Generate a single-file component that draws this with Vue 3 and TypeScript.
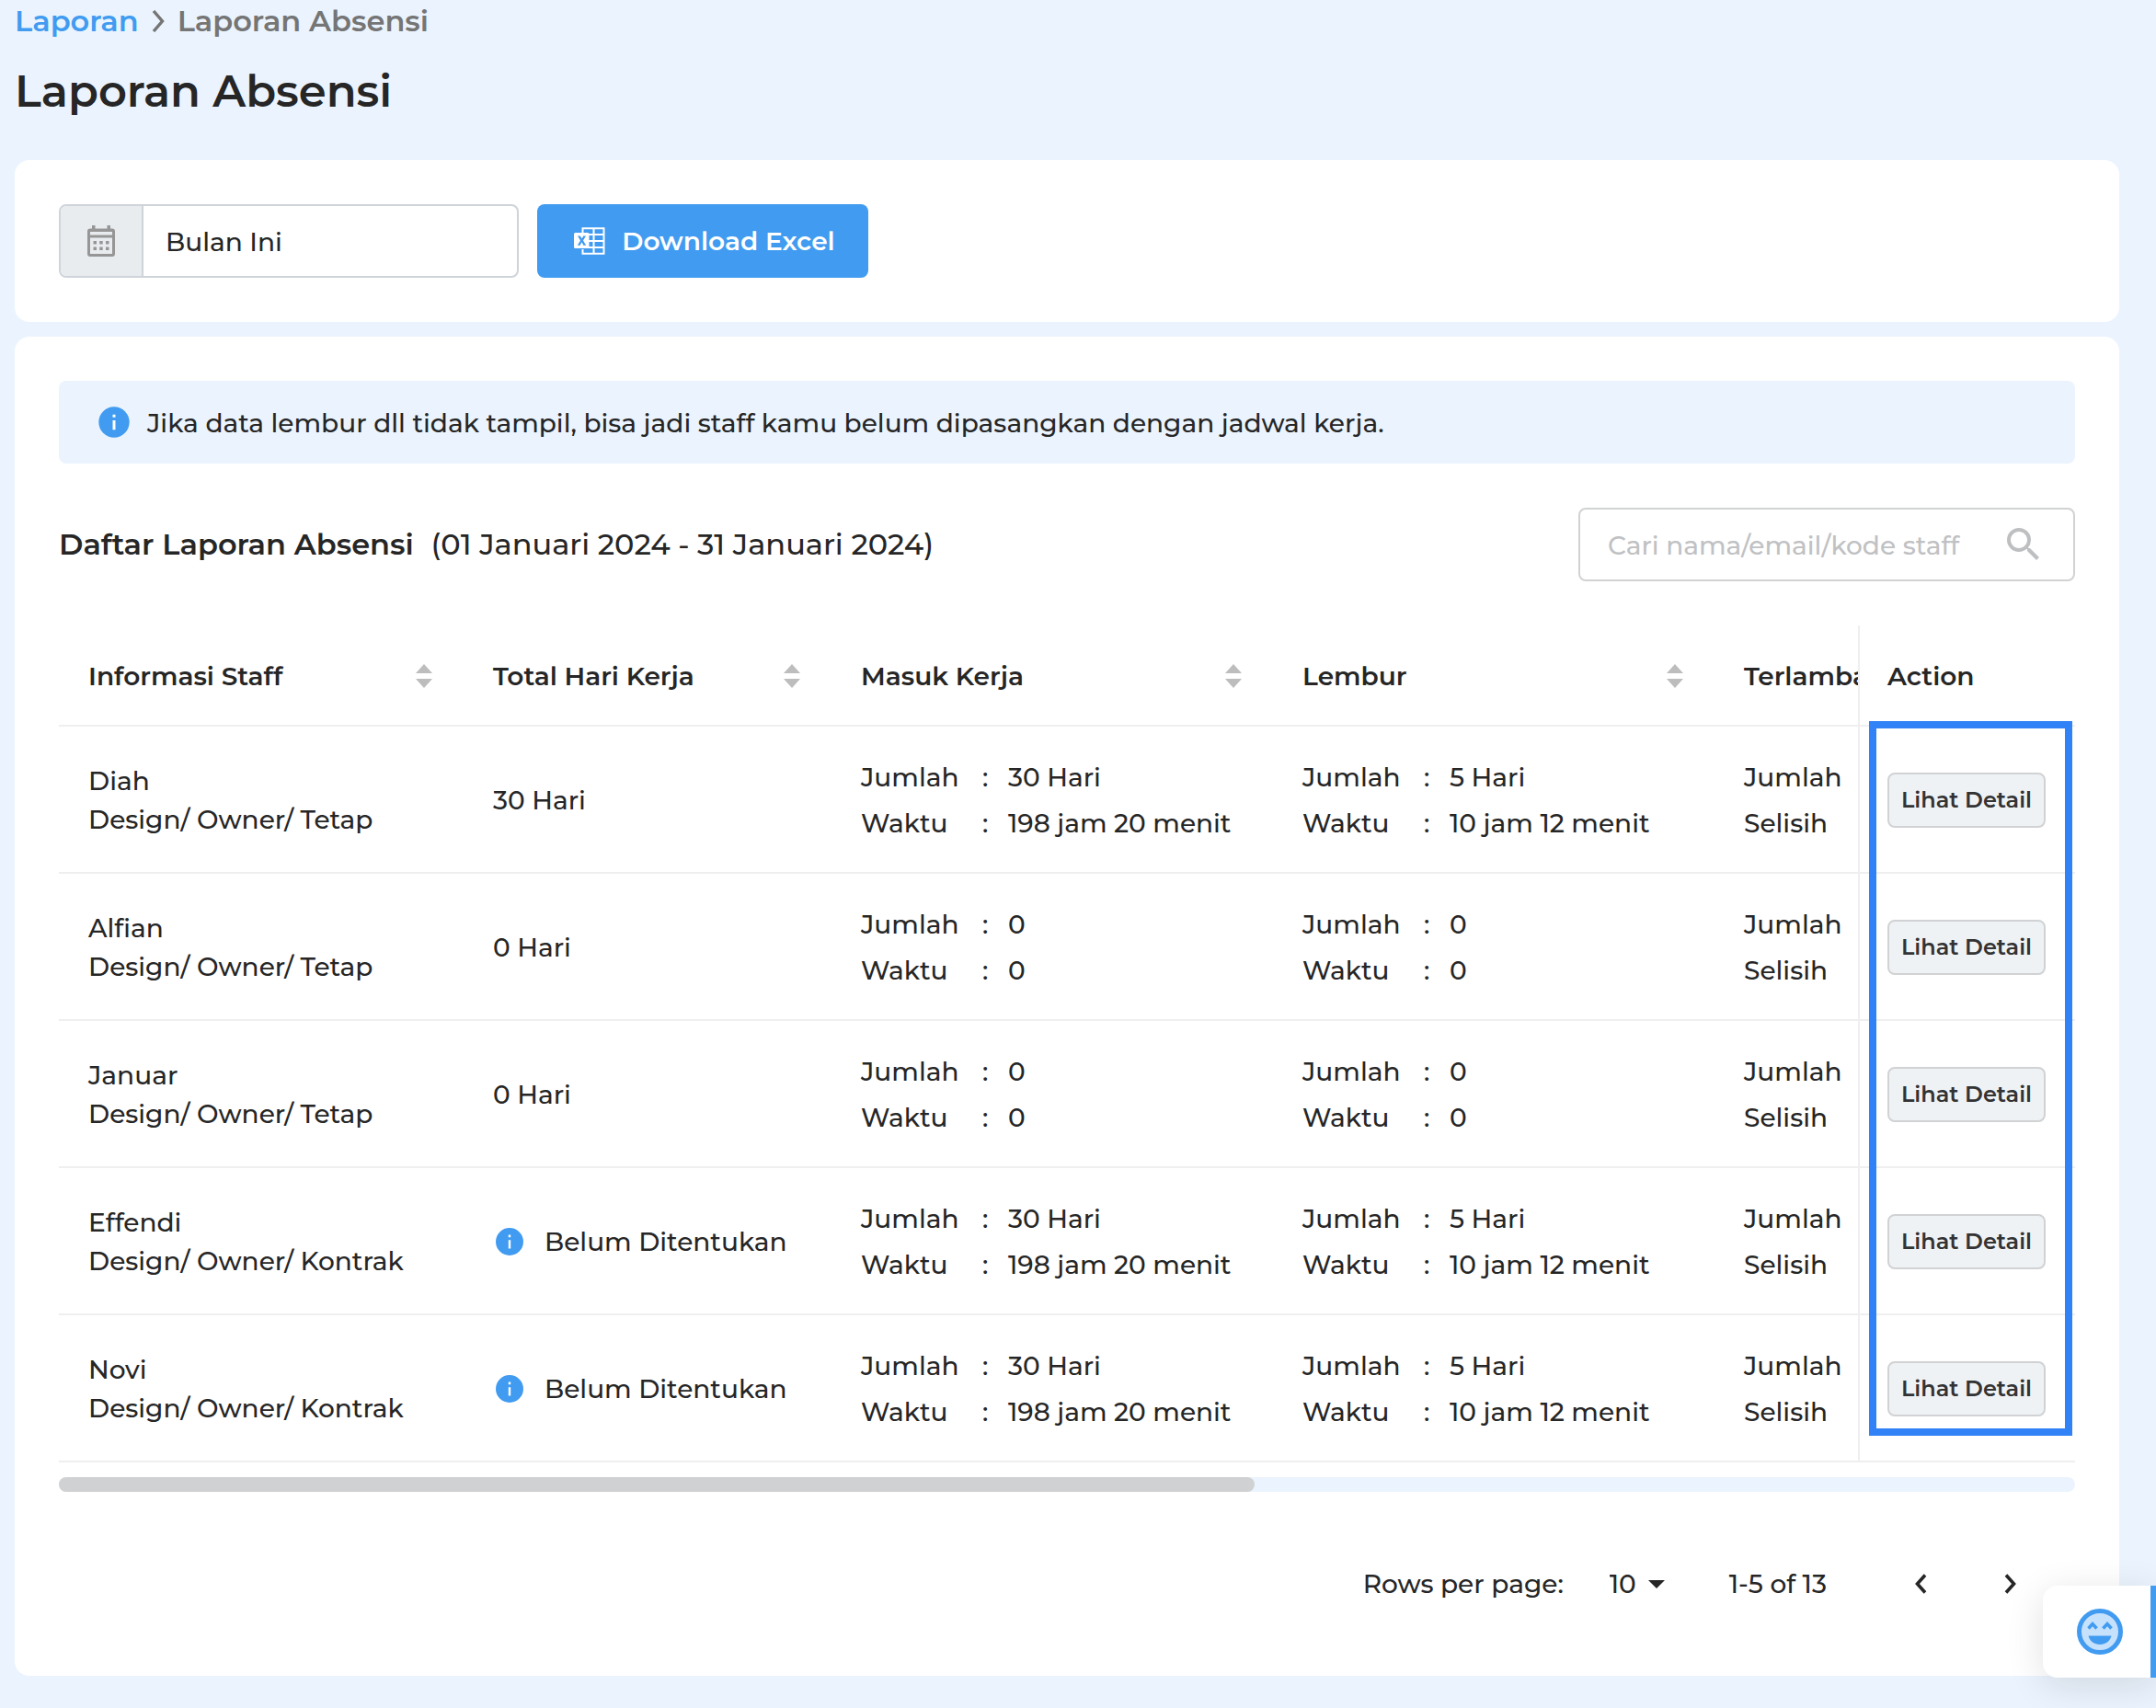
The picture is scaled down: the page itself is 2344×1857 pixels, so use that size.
<script setup lang="ts">
import { ref } from 'vue'

interface Metric {
  label: string
  value: string
}

interface StaffRow {
  name: string
  detail: string
  workDays: string
  pending: boolean
  present: Metric[]
  overtime: Metric[]
}

const filled = {
  present: [
    { label: 'Jumlah', value: '30 Hari' },
    { label: 'Waktu', value: '198 jam 20 menit' },
  ],
  overtime: [
    { label: 'Jumlah', value: '5 Hari' },
    { label: 'Waktu', value: '10 jam 12 menit' },
  ],
}

const empty = {
  present: [
    { label: 'Jumlah', value: '0' },
    { label: 'Waktu', value: '0' },
  ],
  overtime: [
    { label: 'Jumlah', value: '0' },
    { label: 'Waktu', value: '0' },
  ],
}

const rows: StaffRow[] = [
  { name: 'Diah', detail: 'Design/ Owner/ Tetap', workDays: '30 Hari', pending: false, ...filled },
  { name: 'Alfian', detail: 'Design/ Owner/ Tetap', workDays: '0 Hari', pending: false, ...empty },
  { name: 'Januar', detail: 'Design/ Owner/ Tetap', workDays: '0 Hari', pending: false, ...empty },
  { name: 'Effendi', detail: 'Design/ Owner/ Kontrak', workDays: 'Belum Ditentukan', pending: true, ...filled },
  { name: 'Novi', detail: 'Design/ Owner/ Kontrak', workDays: 'Belum Ditentukan', pending: true, ...filled },
]

const sortable = ['Informasi Staff', 'Total Hari Kerja', 'Masuk Kerja', 'Lembur']

const period = ref('Bulan Ini')
const keyword = ref('')
const perPage = ref('10')
</script>

<template>
  <main class="page">
    <nav class="breadcrumb" aria-label="Breadcrumb">
      <a href="#">Laporan</a>
      <svg class="crumb-arrow" viewBox="0 0 14 24" aria-hidden="true">
        <path d="M2 1 11.500 12 2 23" fill="none" stroke="currentColor" stroke-width="3.400" />
      </svg>
      <span>Laporan Absensi</span>
    </nav>
    <h1>Laporan Absensi</h1>

    <section class="card filters">
      <label class="period">
        <span class="period-icon">
          <svg viewBox="0 0 30 34" aria-label="Periode">
            <path
              fill="currentColor"
              fill-rule="evenodd"
              d="M5 0h3.500v3.500h13V0H25v3.500h2a3 3 0 0 1 3 3V31a3 3 0 0 1-3 3H3a3 3 0 0 1-3-3V6.500a3 3 0 0 1 3-3h2zM3 7v3.500h24V7zM3 13.500V31h24V13.500z"
            />
            <path
              fill="currentColor"
              d="M6.500 17h3.500v3.500H6.500zM13.200 17h3.500v3.500h-3.500zM20 17h3.500v3.500H20zM6.500 23.500h3.500V27H6.500zM13.200 23.500h3.500V27h-3.500zM20 23.500h3.500V27H20z"
            />
          </svg>
        </span>
        <input v-model="period" type="text" readonly />
      </label>
      <button type="button" class="download">
        <svg viewBox="0 0 34 30" aria-hidden="true">
          <path d="M9.500 6V1.200H32.500V28.800H9.500V24" fill="none" stroke="currentColor" stroke-width="2" />
          <path d="M9 8h24M16 15h17M9 22h24M21.500 1v28" fill="none" stroke="currentColor" stroke-width="2" />
          <path
            fill="currentColor"
            fill-rule="evenodd"
            d="M1.500 6H15a1.500 1.500 0 0 1 1.500 1.500v14A1.500 1.500 0 0 1 15 23H1.500A1.500 1.500 0 0 1 0 21.500v-14A1.500 1.500 0 0 1 1.500 6zM4 9.500l3 5-3.200 5.200h2.800l1.900-3.400 1.900 3.400h2.800L10 14.500l3-5h-2.700l-1.700 3.100-1.800-3.100z"
          />
        </svg>
        Download Excel
      </button>
    </section>

    <section class="card report">
      <div class="notice" role="note">
        <svg class="info" viewBox="0 0 24 24" aria-hidden="true">
          <circle cx="12" cy="12" r="10" />
          <path d="M11.100 7h1.800v1.900h-1.800zM11.100 10.800h1.800V17h-1.800z" />
        </svg>
        <span>Jika data lembur dll tidak tampil, bisa jadi staff kamu belum dipasangkan dengan jadwal kerja.</span>
      </div>

      <header class="list-head">
        <h2>Daftar Laporan Absensi <span>(01 Januari 2024 - 31 Januari 2024)</span></h2>
        <label class="search">
          <input v-model="keyword" type="text" placeholder="Cari nama/email/kode staff" />
          <svg viewBox="0 0 24 24" aria-label="Cari">
            <path
              fill="currentColor"
              d="M15.500 14h-.79l-.28-.27A6.471 6.471 0 0 0 16 9.500 6.500 6.500 0 1 0 9.500 16c1.610 0 3.090-.59 4.230-1.570l.27.28v.79l5 4.990L20.490 19l-4.990-5zm-6 0C7.010 14 5 11.990 5 9.500S7.010 5 9.500 5 14 7.010 14 9.500 11.990 14 9.500 14z"
            />
          </svg>
        </label>
      </header>

      <div class="table-area">
        <table>
          <colgroup>
            <col class="c-staff" />
            <col class="c-days" />
            <col class="c-metric" />
            <col class="c-metric" />
            <col />
            <col class="c-action" />
          </colgroup>
          <thead>
            <tr>
              <th v-for="title in sortable" :key="title" scope="col">
                <div class="th-inner">
                  {{ title }}
                  <svg viewBox="0 0 18 26" aria-hidden="true">
                    <path d="M9 0 18 10H0zM9 26 0 16h18z" fill="currentColor" />
                  </svg>
                </div>
              </th>
              <th scope="col" class="late">Terlambat</th>
              <th scope="col" class="action">Action</th>
            </tr>
          </thead>
          <tbody>
            <tr v-for="row in rows" :key="row.name">
              <td>
                <div>{{ row.name }}</div>
                <div>{{ row.detail }}</div>
              </td>
              <td>
                <div class="days">
                  <svg v-if="row.pending" class="info" viewBox="0 0 24 24" aria-hidden="true">
                    <circle cx="12" cy="12" r="10" />
                    <path d="M11.200 7h1.600v1.800h-1.600zM11.200 10.800h1.600V17h-1.600z" />
                  </svg>
                  <span>{{ row.workDays }}</span>
                </div>
              </td>
              <td v-for="(group, g) in [row.present, row.overtime]" :key="g">
                <div v-for="item in group" :key="item.label" class="metric">
                  <span>{{ item.label }}</span>
                  <span>:</span>
                  <span>{{ item.value }}</span>
                </div>
              </td>
              <td class="late">
                <div class="metric"><span>Jumlah</span></div>
                <div class="metric"><span>Selisih</span></div>
              </td>
              <td class="action"><button type="button" class="detail">Lihat Detail</button></td>
            </tr>
          </tbody>
        </table>
        <div class="highlight" aria-hidden="true"></div>
      </div>
      <div class="scroll-track"><div class="scroll-thumb"></div></div>

      <footer class="pager">
        <label for="per-page">Rows per page:</label>
        <div class="select-wrap">
          <select id="per-page" v-model="perPage">
            <option>10</option>
          </select>
          <svg viewBox="0 0 18 9" aria-hidden="true"><path d="M0 0h18L9 9z" fill="currentColor" /></svg>
        </div>
        <span class="range">1-5 of 13</span>
        <button type="button" aria-label="Sebelumnya">
          <svg viewBox="0 0 14 22" aria-hidden="true">
            <path d="M12 1.500 3.500 11l8.500 9.500" fill="none" stroke="currentColor" stroke-width="3.600" />
          </svg>
        </button>
        <button type="button" aria-label="Berikutnya">
          <svg viewBox="0 0 14 22" aria-hidden="true">
            <path d="M2 1.500l8.500 9.500L2 20.500" fill="none" stroke="currentColor" stroke-width="3.600" />
          </svg>
        </button>
      </footer>
    </section>

    <button type="button" class="feedback" aria-label="Feedback">
      <svg viewBox="0 0 50 50" aria-hidden="true">
        <circle cx="25" cy="25" r="22.500" fill="#c6e1fb" stroke="#419bf0" stroke-width="5" />
        <path
          d="M12.500 21.500 17 16.500l4.500 5M28.500 21.500l4.500-5 4.500 5"
          fill="none"
          stroke="#419bf0"
          stroke-width="3.500"
        />
        <path d="M12.500 29.500h25C36 35.500 31 39 25 39s-11-3.500-12.500-9.500z" fill="#419bf0" />
      </svg>
    </button>
  </main>
</template>

<style>
body {
  background: #ebf4fe;
}
</style>

<style scoped>
.page {
  box-sizing: border-box;
  padding: 0 40px 32px 16px;
  color: #262626;
  font-family: Montserrat, Inter, 'Liberation Sans', sans-serif;
  font-size: 28px;
  font-weight: 500;
  line-height: 42px;
}

.page *,
.page *::before {
  box-sizing: border-box;
}

button,
input,
select {
  margin: 0;
  padding: 0;
  border: 0;
  background: none;
  color: inherit;
  font: inherit;
}

svg {
  display: block;
  flex: none;
}

.breadcrumb {
  display: flex;
  align-items: center;
  gap: 14px;
  height: 46px;
  color: #757575;
  font-size: 32px;
  font-weight: 600;
}

.breadcrumb a {
  color: #419bf0;
  text-decoration: none;
}

.crumb-arrow {
  width: 14px;
  height: 24px;
}

h1 {
  margin: 20px 0 42px;
  font-size: 48px;
  font-weight: 600;
  line-height: 66px;
}

.card {
  padding: 48px;
  border-radius: 16px;
  background: #fff;
}

.filters {
  display: flex;
  gap: 20px;
  margin-bottom: 16px;
}

.period {
  display: flex;
  width: 500px;
  height: 80px;
  border: 2px solid #ced4da;
  border-radius: 8px;
  overflow: hidden;
}

.period-icon {
  display: flex;
  flex: none;
  align-items: center;
  justify-content: center;
  width: 90px;
  border-right: 2px solid #ced4da;
  background: #e9ecef;
  color: #969696;
}

.period-icon svg {
  width: 30px;
  height: 34px;
}

.period input {
  flex: 1;
  min-width: 0;
  padding: 2px 0 0 24px;
  outline: 0;
}

.download {
  display: flex;
  align-items: center;
  justify-content: center;
  gap: 18px;
  width: 360px;
  height: 80px;
  padding-left: 4px;
  border-radius: 8px;
  background: #419bf0;
  color: #fff;
  font-weight: 600;
  white-space: nowrap;
}

.download svg {
  width: 34px;
  height: 30px;
}

.report {
  padding-bottom: 64px;
}

.notice {
  display: flex;
  align-items: center;
  gap: 16px;
  min-height: 90px;
  padding: 0 40px;
  border-radius: 8px;
  background: #ebf4fe;
}

.notice span {
  padding-top: 2px;
}

.info {
  width: 36px;
  height: 36px;
}

.info circle {
  fill: #419bf0;
}

.info path {
  fill: #fff;
}

.notice .info {
  width: 40px;
  height: 40px;
}

.list-head {
  display: flex;
  align-items: center;
  justify-content: space-between;
  margin: 48px 0;
}

h2 {
  margin: 0;
  font-size: 32px;
  font-weight: 600;
}

h2 span {
  margin-left: 10px;
  font-weight: 500;
}

.search {
  display: flex;
  align-items: center;
  width: 540px;
  height: 80px;
  padding: 0 30px;
  border: 2px solid #d1d2d4;
  border-radius: 8px;
  color: #bdbfc1;
}

.search input {
  flex: 1;
  min-width: 0;
  padding-top: 2px;
  color: #262626;
  outline: 0;
}

.search input::placeholder {
  color: #c0c1c3;
  opacity: 1;
}

.search svg {
  width: 48px;
  height: 48px;
}

.table-area {
  position: relative;
}

table {
  width: 100%;
  border-collapse: separate;
  border-spacing: 0;
  table-layout: fixed;
}

.c-staff {
  width: 440px;
}

.c-days {
  width: 400px;
}

.c-metric {
  width: 480px;
}

.c-action {
  width: 236px;
}

th,
td {
  padding: 2px 34px 0 32px;
  border-bottom: 2px solid #efefef;
  text-align: left;
  vertical-align: middle;
  white-space: nowrap;
}

th {
  height: 110px;
  font-weight: 600;
}

td {
  height: 160px;
}

th.late,
td.late {
  padding-right: 0;
  overflow: hidden;
}

th.action,
td.action {
  padding-right: 30px;
  padding-left: 30px;
  border-left: 2px solid #efefef;
}

.th-inner {
  display: flex;
  align-items: center;
  justify-content: space-between;
}

.th-inner svg {
  width: 18px;
  height: 26px;
  color: #bdbdbd;
}

.days {
  display: flex;
  align-items: center;
  gap: 20px;
}

.metric {
  display: grid;
  grid-template-columns: 132px 28px 1fr;
  line-height: 50px;
}

.detail {
  display: block;
  width: 172px;
  height: 60px;
  border: 2px solid #d1d2d4;
  border-radius: 8px;
  background: #eff2f5;
  color: #333;
  font-size: 24px;
  font-weight: 600;
}

/* Frame that draws attention to the detail buttons */
.highlight {
  position: absolute;
  top: 104px;
  right: 3px;
  bottom: 29px;
  width: 221px;
  border: 8px solid #3182f6;
  pointer-events: none;
}

.scroll-track {
  height: 16px;
  margin-top: 16px;
  border-radius: 8px;
  background: #ebf4fe;
}

.scroll-thumb {
  width: 1300px;
  max-width: 60%;
  height: 16px;
  border-radius: 8px;
  background: #d0d1d3;
}

.pager {
  display: flex;
  align-items: center;
  justify-content: flex-end;
  gap: 50px;
  height: 72px;
  margin-top: 64px;
  padding-right: 46px;
}

.select-wrap {
  display: grid;
  align-items: center;
  width: 60px;
  margin-right: 20px;
}

.select-wrap select,
.select-wrap svg {
  grid-area: 1 / 1;
}

.select-wrap select {
  width: 60px;
  appearance: none;
  outline: 0;
}

.select-wrap svg {
  justify-self: end;
  width: 18px;
  height: 9px;
  pointer-events: none;
}

.range {
  margin-right: 28px;
}

.pager button {
  display: flex;
  align-items: center;
  justify-content: center;
  width: 48px;
  height: 48px;
}

.pager button svg {
  width: 14px;
  height: 22px;
}

.feedback {
  position: fixed;
  right: 0;
  bottom: 33px;
  display: flex;
  align-items: center;
  justify-content: center;
  width: 123px;
  height: 100px;
  padding-left: 6px;
  border-right: 6px solid #419bf0;
  border-radius: 16px 0 0 16px;
  background: #fff;
  box-shadow: 0 8px 40px rgba(0, 0, 0, 0.12);
}

.feedback svg {
  width: 50px;
  height: 50px;
}
</style>
